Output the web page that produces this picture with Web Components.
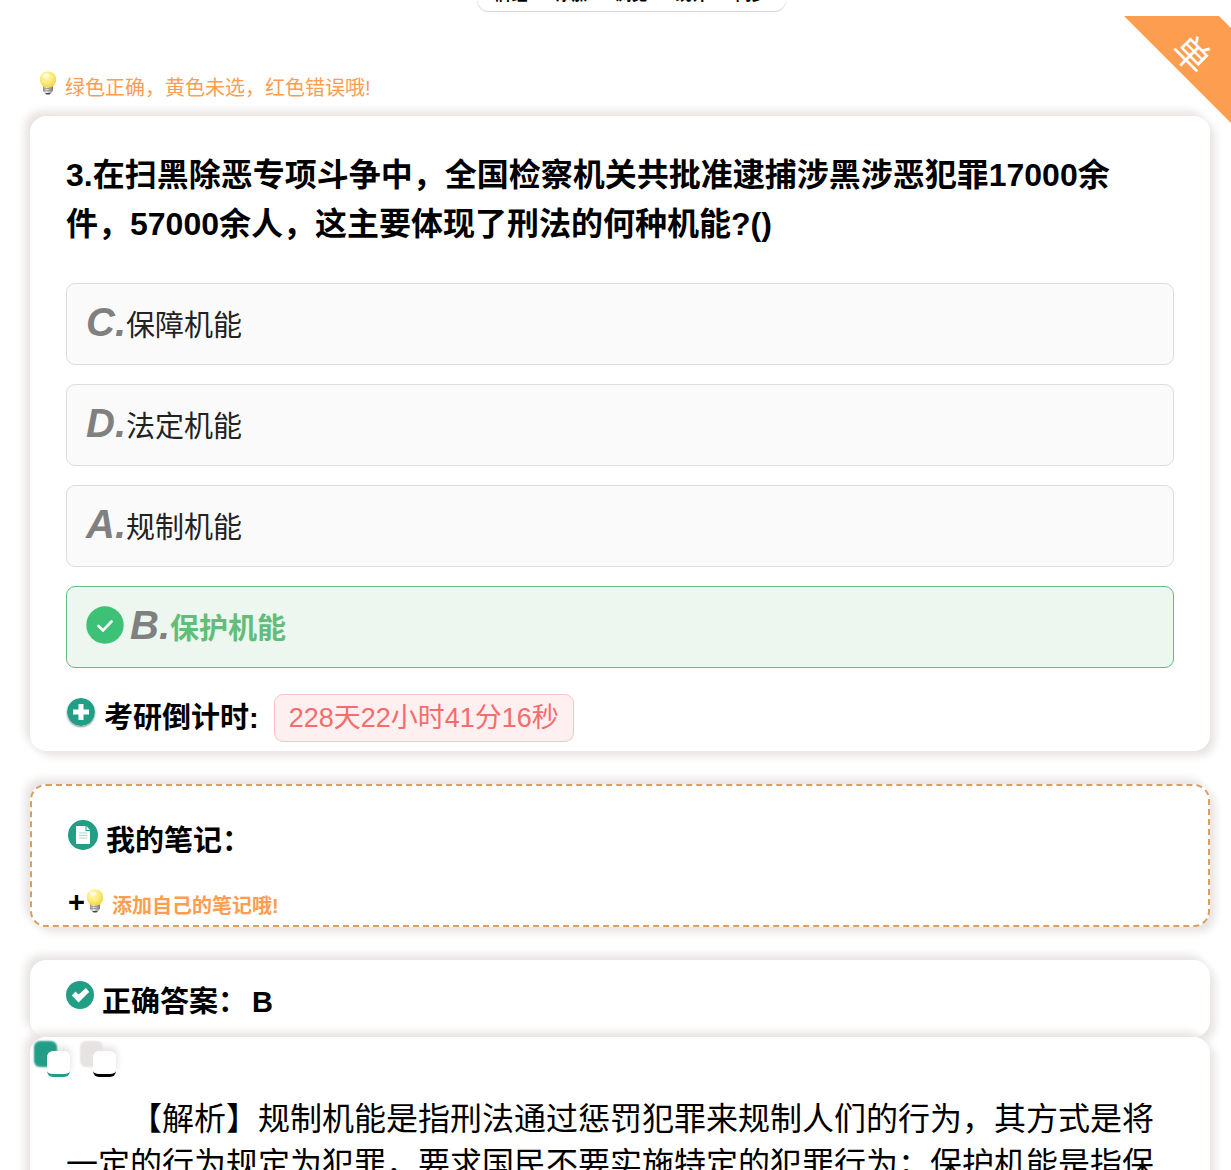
<!DOCTYPE html>
<html lang="zh-CN">
<head>
<meta charset="utf-8">
<meta name="viewport" content="width=device-width, initial-scale=1">
<title>刑法 - 单选题</title>
<style>
	html {
		overflow:hidden;
	}
	body {
		--accent:#fd9d50;
		--teal:#219e85;
		--shade:#e7e3e2;
		margin:0;
		background:#fff;
		color:#000;
		font-family:"Liberation Sans", "Noto Sans CJK SC", sans-serif;
		font-size:29px;
	}
	main {
		display:flex;
		flex-direction:column;
		padding:0 21px 0 30px;
	}
	h1 {
		margin:0 36px 34px 0;
		font-size:32px;
		line-height:49px;
	}
	p {
		margin:0;
		font-size:32px;
		line-height:45px;
		text-indent:2em;
	}
</style>
</head>
<body>
<quiz-toolbar></quiz-toolbar>
<quiz-ribbon>单</quiz-ribbon>
<main>
	<quiz-tip>绿色正确，黄色未选，红色错误哦!</quiz-tip>
	<quiz-card kind="question">
		<h1>3.在扫黑除恶专项斗争中，全国检察机关共批准逮捕涉黑涉恶犯罪17000余件，57000余人，这主要体现了刑法的何种机能?()</h1>
		<quiz-options>
			<quiz-option letter="C">保障机能</quiz-option>
			<quiz-option letter="D">法定机能</quiz-option>
			<quiz-option letter="A">规制机能</quiz-option>
			<quiz-option letter="B" correct>保护机能</quiz-option>
		</quiz-options>
		<quiz-countdown label="考研倒计时:">228天22小时41分16秒</quiz-countdown>
	</quiz-card>
	<quiz-card kind="notes">
		<quiz-heading icon="note">我的笔记：</quiz-heading>
		<quiz-add-note>添加自己的笔记哦!</quiz-add-note>
	</quiz-card>
	<quiz-card kind="answer">
		<quiz-heading icon="check">正确答案：<span slot="value">B</span></quiz-heading>
	</quiz-card>
	<quiz-card kind="analysis">
		<quiz-tabs></quiz-tabs>
		<p>【解析】规制机能是指刑法通过惩罚犯罪来规制人们的行为，其方式是将一定的行为规定为犯罪，要求国民不要实施特定的犯罪行为；保护机能是指保</p>
	</quiz-card>
</main>
<script>
const icons = {
	bulb: `
		<svg width="18" height="24" viewBox="0 0 18 24" aria-hidden="true">
			<defs>
				<radialGradient id="glass" cx=".4" cy=".35" r=".65">
					<stop offset="0" stop-color="#fff8b8"/>
					<stop offset=".55" stop-color="#fdec7c"/>
					<stop offset="1" stop-color="#f5d548"/>
				</radialGradient>
				<linearGradient id="metal">
					<stop offset="0" stop-color="#8d8d8d"/>
					<stop offset=".35" stop-color="#eee"/>
					<stop offset="1" stop-color="#777"/>
				</linearGradient>
			</defs>
			<path d="M4 15h10v4.500l-2 2.500H6l-2-2.500z" fill="url(#metal)"/>
			<path d="M4 18l10-1M4 20l10-1" stroke="#888" stroke-width=".8"/>
			<path d="M6 22h6l-1.500 1.500h-3z" fill="#444"/>
			<path d="M9 .5C4.200.5.800 4 .8 8.500c0 3 1.700 5 2.700 6.600C4.600 17 13.400 17 14.500 15.100c1-1.600 2.700-3.600 2.700-6.600C17.200 4 13.800.5 9 .5z" fill="url(#glass)"/>
			<ellipse cx="7" cy="4.500" rx="3.500" ry="2.200" fill="#fff" opacity=".6"/>
		</svg>`,
	plus: `
		<svg width="28" height="28" viewBox="0 0 28 28" aria-hidden="true">
			<circle cx="14" cy="14" r="14" fill="#219e85"/>
			<path d="M14 6v16M6 14h16" stroke="#fff" stroke-width="5"/>
		</svg>`,
	note: `
		<svg width="30" height="30" viewBox="0 0 30 30" aria-hidden="true">
			<circle cx="15" cy="15" r="15" fill="#219e85"/>
			<path d="M8 6h9.500v5H22v13H8z" fill="#fff"/>
			<path d="M18.500 6v4H22z" fill="#fff"/>
			<path d="M11 13h8M11 15.500h8M11 18h8" stroke="#a8d8cd" stroke-width="1"/>
		</svg>`,
	check: `
		<svg width="28" height="28" viewBox="0 0 28 28" aria-hidden="true">
			<circle cx="14" cy="14" r="14" fill="#219e85"/>
			<path d="M5.800 14.500L9.500 10.500l3 3L20 7l3.200 4L12.500 21.500z" fill="#fff"/>
		</svg>`,
	right: `
		<svg width="38" height="38" viewBox="0 0 38 38" aria-hidden="true">
			<circle cx="19" cy="19" r="18.700" fill="#3cc177"/>
			<path d="M12.500 20l4.500 4.500 8.500-9" fill="none" stroke="#fff" stroke-width="2.600" stroke-linecap="round"/>
		</svg>`
};

class QuizElement extends HTMLElement {
	connectedCallback() {
		const template = document.createElement('template');
		template.innerHTML = this.template;
		this.attachShadow({mode: 'open'}).appendChild(template.content);
	}
}

customElements.define('quiz-toolbar', class extends QuizElement {
	get template() {
		const links = ['牌组', '添加', '浏览', '统计', '同步'];
		return `
		<style>
		:host {
			display:flex;
			justify-content:center;
			align-items:flex-end;
			height:16px;
			padding-bottom:5px;
			box-sizing:border-box;
			margin-left:32px;
		}
		nav {
			display:flex;
			gap:28px;
			padding:0 18px 4px;
			border-radius:12px;
			background:#fff;
			box-shadow:0 1px 1px #d4d4d4;
			font-size:16px;
			font-weight:bold;
			line-height:24px;
		}
		a {
			color:#000;
			text-decoration:none;
		}
		</style>
		<nav>${links.map(text => `<a href="#">${text}</a>`).join('')}</nav>`;
	}
});

customElements.define('quiz-ribbon', class extends QuizElement {
	get template() {
		return `
		<style>
		:host {
			position:absolute;
			top:16px;
			right:0;
			display:flex;
			align-items:center;
			justify-content:center;
			width:107px;
			height:107px;
			padding:0 0 30px 28px;
			box-sizing:border-box;
			clip-path:polygon(0 0, 95px 0, 100% 12px, 100% 100%);
			background:var(--accent);
			color:#fff;
			font-size:36px;
			line-height:40px;
		}
		span {
			transform:rotate(45deg);
		}
		</style>
		<span><slot></slot></span>`;
	}
});

customElements.define('quiz-tip', class extends QuizElement {
	get template() {
		return `
		<style>
		:host {
			display:flex;
			gap:8px;
			padding:55px 9px 11px;
			color:var(--accent);
			font-size:20px;
			line-height:34px;
		}
		</style>
		${icons.bulb}
		<span><slot></slot></span>`;
	}
});

customElements.define('quiz-card', class extends QuizElement {
	get template() {
		return `
		<style>
		:host {
			display:block;
			margin-bottom:33px;
			padding:0 36px;
			border-radius:16px;
			background:#fff;
			box-shadow:5px 5px 8px var(--shade), -5px -5px 8px var(--shade);
		}
		:host([kind="question"]) {
			padding-top:35px;
			padding-bottom:9px;
		}
		:host([kind="notes"]) {
			padding:28px 36px 4px;
			border:2px dashed #d99f61;
		}
		:host([kind="answer"]) {
			margin-bottom:0;
			padding-top:15px;
			padding-bottom:8px;
		}
		:host([kind="analysis"]) {
			padding-bottom:36px;
		}
		</style>
		<slot></slot>`;
	}
});

customElements.define('quiz-options', class extends QuizElement {
	get template() {
		return `
		<style>
		:host {
			display:grid;
			gap:19px;
			margin-bottom:26px;
		}
		</style>
		<slot></slot>`;
	}
});

customElements.define('quiz-option', class extends QuizElement {
	get template() {
		return `
		<style>
		:host {
			display:block;
		}
		button {
			display:flex;
			align-items:center;
			width:100%;
			height:82px;
			padding:0 19px 4px;
			border:1px solid #ddd;
			border-radius:9px;
			background:#fafafa;
			color:#222;
			font:inherit;
			text-align:left;
		}
		svg {
			margin-right:6px;
		}
		i {
			color:#808080;
			font-size:40px;
			font-weight:bold;
		}
		:host([correct]) button {
			border-color:#62bd7b;
			background:#edf7f0;
			color:#62bd7b;
			font-weight:bold;
		}
		</style>
		<button type="button">
			${this.hasAttribute('correct') ? icons.right : ''}
			<span><i>${this.getAttribute('letter')}.</i><slot></slot></span>
		</button>`;
	}
});

customElements.define('quiz-countdown', class extends QuizElement {
	get template() {
		return `
		<style>
		:host {
			display:flex;
			height:48px;
		}
		svg {
			margin:4px 9px 0 1px;
			border-radius:50%;
			box-shadow:0 1px 2px #888;
		}
		b {
			margin-right:15px;
			line-height:48px;
		}
		time {
			padding:0 14px;
			border:1px solid #fbc4c4;
			border-radius:9px;
			background:#fef0f0;
			color:#f56c6c;
			font-size:27px;
			line-height:46px;
		}
		</style>
		${icons.plus}
		<b>${this.getAttribute('label')}</b>
		<time><slot></slot></time>`;
	}
});

customElements.define('quiz-heading', class extends QuizElement {
	get template() {
		return `
		<style>
		:host {
			display:flex;
			font-weight:bold;
			line-height:54px;
		}
		svg {
			margin:6px 8px 0 0;
		}
		::slotted([slot="value"]) {
			margin-left:5px;
		}
		</style>
		${icons[this.getAttribute('icon')]}
		<slot></slot>
		<slot name="value"></slot>`;
	}
});

customElements.define('quiz-add-note', class extends QuizElement {
	get template() {
		return `
		<style>
		:host {
			display:block;
			margin-top:18px;
		}
		button {
			display:flex;
			align-items:center;
			height:35px;
			padding:0;
			border:0;
			background:none;
			color:var(--accent);
			font:inherit;
			font-size:20px;
			font-weight:bold;
			line-height:29px;
		}
		b {
			margin-bottom:2px;
			color:#000;
			font-size:29px;
		}
		svg {
			margin:0 8px 5px 1px;
		}
		span {
			margin-top:6px;
		}
		</style>
		<button type="button"><b>+</b>${icons.bulb}<span><slot></slot></span></button>`;
	}
});

customElements.define('quiz-tabs', class extends QuizElement {
	get template() {
		return `
		<style>
		:host {
			display:flex;
			gap:23px;
			margin-left:-19px;
			padding:14px 0 20px;
		}
		button {
			width:23px;
			height:26px;
			padding:0;
			border:0;
			border-bottom:3px solid #000;
			border-radius:6px;
			background:#fff;
			box-shadow:-13px -10px 2px var(--shade), 1px -4px 6px var(--shade);
		}
		button[aria-selected="true"] {
			border-color:var(--teal);
			box-shadow:-13px -10px 2px var(--teal), 1px -4px 6px var(--shade);
		}
		</style>
		<button type="button" role="tab" aria-selected="true" aria-label="解析"></button>
		<button type="button" role="tab" aria-selected="false" aria-label="笔记"></button>`;
	}
});
</script>
</body>
</html>
